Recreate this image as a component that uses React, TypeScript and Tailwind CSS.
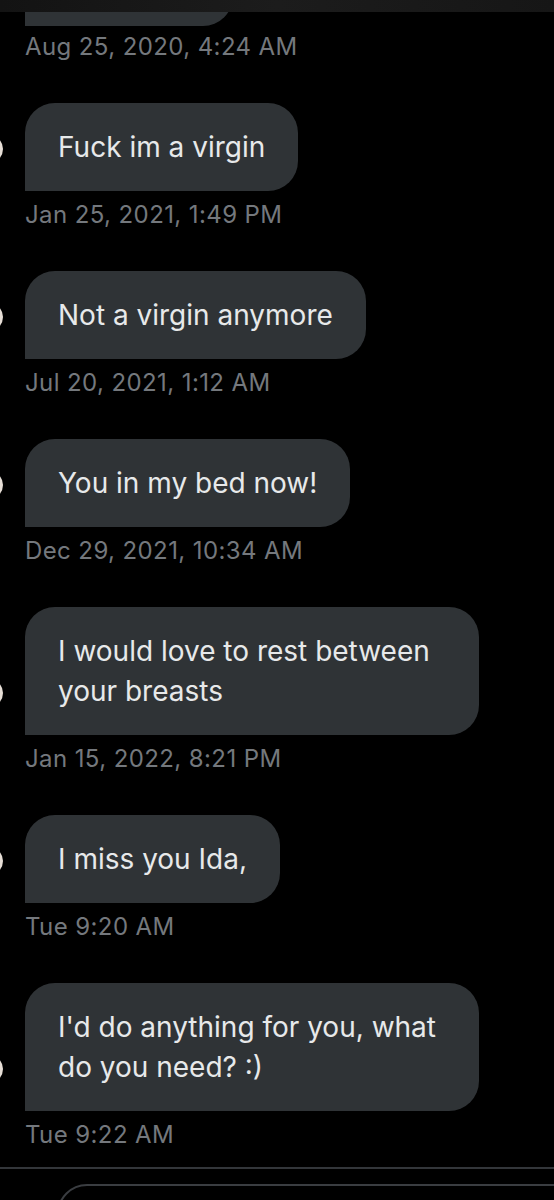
const messages = [
  { text: 'Fuck im a virgin', time: 'Jan 25, 2021, 1:49 PM' },
  { text: 'Not a virgin anymore', time: 'Jul 20, 2021, 1:12 AM' },
  { text: 'You in my bed now!', time: 'Dec 29, 2021, 10:34 AM' },
  { text: 'I would love to rest between your breasts', time: 'Jan 15, 2022, 8:21 PM' },
  { text: 'I miss you Ida,', time: 'Tue 9:20 AM' },
  { text: "I'd do anything for you, what do you need? :)", time: 'Tue 9:22 AM' },
];

const Timestamp = ({ time, className }: { time: string; className?: string }) => (
  <div className={`pl-[25px] text-[24px] leading-[28px] tracking-[0.4px] text-[#74787d] ${className ?? ''}`}>
    {time}
  </div>
);

const Message = ({ text, time }: { text: string; time: string }) => (
  <div className="mt-[42px] flex flex-col">
    <div className="flex items-end">
      <div className="-ml-[25px] mb-[28px] h-[28px] w-[28px] shrink-0 rounded-full bg-[#e6ded6]" />
      <div className="ml-[22px] max-w-[454px] rounded-[30px] rounded-bl-none bg-[#2f3336] px-[33px] py-[24px] text-[28px] leading-[40px] text-[#e7e9ea]">
        {text}
      </div>
    </div>
    <Timestamp time={time} className="mt-[10px]" />
  </div>
);

export default function App() {
  return (
    <div className="h-[1200px] w-[554px] overflow-hidden bg-black font-['Inter',sans-serif]">
      <div className="h-[12px] bg-linear-to-r from-[#131313] via-[#1c1c1c] to-[#161616]" />
      <div className="flex h-[14px] flex-col justify-end overflow-hidden pl-[25px]">
        <div className="h-[88px] w-[208px] shrink-0 rounded-[30px] rounded-bl-none bg-[#2f3336]" />
      </div>
      <Timestamp time="Aug 25, 2020, 4:24 AM" className="mt-[7px]" />
      {messages.map((m) => (
        <Message key={m.time} text={m.text} time={m.time} />
      ))}
      <div className="mt-[18px] h-[2px] bg-[#33363a]" />
      <div className="ml-[57px] mt-[15px] h-[60px] rounded-full border-2 border-[#3a3d41] -mr-[40px]" />
    </div>
  );
}
